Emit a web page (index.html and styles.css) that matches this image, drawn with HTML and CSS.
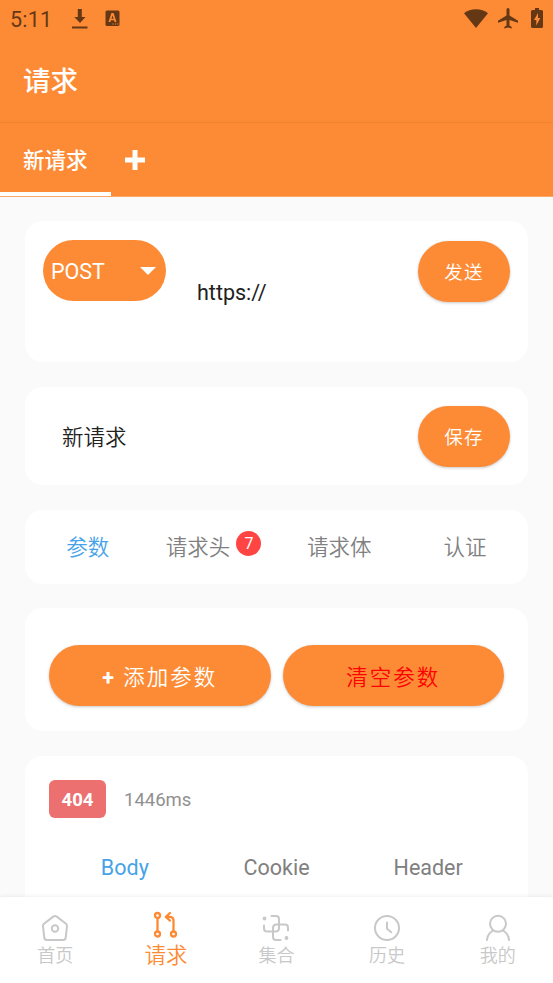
FILE: index.html
```html
<!DOCTYPE html>
<html lang="zh-CN">
<head>
  <meta charset="UTF-8">
  <meta name="viewport" content="width=device-width, initial-scale=1.0">
  <title>请求</title>
  <link rel="stylesheet" href="styles.css">
</head>
<body>
  <header class="header">
    <div class="statusbar">
      <span class="time">5:11</span>
      <svg class="icon-download" width="16" height="22" viewBox="0 0 16 22"><path d="M5.8 1h4v8h3.7L8 15 2.3 9h3.5zM0 18.5h15.5v2H0z"/></svg>
      <svg class="icon-lang" width="15" height="17" viewBox="0 0 15 17"><path fill-rule="evenodd" d="M2 .5h11a1.5 1.5 0 0 1 1.5 1.5v12.500a1.500 1.500 0 0 1-1.500 1.500H2A1.500 1.500 0 0 1 .5 14.500V2A1.500 1.500 0 0 1 2 .5zM6.400 3L3.500 12h1.900l.5-1.800h3.200l.5 1.800h1.900L8.600 3zM7.500 5.400l1.100 3.300H6.400zM7.500 13.400v1.100h1.100v-1.100zM10 13.400v1.100h1.100v-1.100zM12.300 13.400v1.100h1.100v-1.100z"/></svg>
      <div class="status-right">
        <svg width="24" height="19" viewBox="0 0 24 19"><path d="M12 19L0 4.200C6-1.200 18-1.200 24 4.200z"/></svg>
        <svg width="20" height="21" viewBox="0 0 20 21"><path d="M20 14.800v-2.100L11.500 7.400V1.500a1.500 1.500 0 0 0-3 0v5.900L0 12.700v2.100l8.500-2.700v5.400L6.300 19v1.600l3.700-1 3.700 1V19l-2.200-1.500v-5.400z"/></svg>
        <svg width="12" height="20" viewBox="0 0 12 20"><path fill-rule="evenodd" d="M4 0h4v2h2.500A1.500 1.500 0 0 1 12 3.500v15a1.500 1.500 0 0 1-1.500 1.500h-9A1.500 1.500 0 0 1 0 18.500v-15A1.500 1.500 0 0 1 1.500 2H4zM7 5l-4 7h2.300v5.500L9.300 10H7z"/></svg>
      </div>
    </div>
    <h1 class="title">请求</h1>
    <div class="request-tabs">
      <div class="request-tab">新请求</div>
      <div class="new-tab"><svg width="20" height="20" viewBox="0 0 20 20"><path d="M10 2.500v15M2.500 10h15" stroke="#fff" stroke-width="5" stroke-linecap="square"/></svg></div>
    </div>
  </header>

  <main class="content">
    <section class="card url-card">
      <div class="method">POST<span class="caret"></span></div>
      <div class="url">https://</div>
      <button class="btn btn-small">发送</button>
    </section>

    <section class="card name-card">
      <div class="name">新请求</div>
      <button class="btn btn-small">保存</button>
    </section>

    <section class="card tabs">
      <div class="tab active">参数</div>
      <div class="tab">请求头<span class="badge">7</span></div>
      <div class="tab">请求体</div>
      <div class="tab">认证</div>
    </section>

    <section class="card actions">
      <button class="btn"><b>+</b> 添加参数</button>
      <button class="btn danger">清空参数</button>
    </section>

    <section class="card response">
      <div class="result">
        <span class="code">404</span>
        <span class="duration">1446ms</span>
      </div>
      <div class="response-tabs">
        <div class="tab active">Body</div>
        <div class="tab">Cookie</div>
        <div class="tab">Header</div>
      </div>
    </section>
  </main>

  <nav class="nav">
    <div class="nav-item">
      <svg width="28" height="28" viewBox="0 0 28 28"><path d="M12.200 2.600L3 9.800q-1.200 1-1 2.500l1.300 11.400Q3.600 26 6 26h16q2.400 0 2.700-2.300L26 12.300q.2-1.500-1-2.500l-9.200-7.200q-1.800-1.300-3.600 0z"/><circle cx="14" cy="14.500" r="3.200"/></svg>
      <span>首页</span>
    </div>
    <div class="nav-item current">
      <svg width="28" height="28" viewBox="0 0 28 28"><circle cx="5.500" cy="4.500" r="2.500"/><circle cx="5.500" cy="23" r="2.500"/><circle cx="21.500" cy="23" r="2.500"/><path d="M5.500 7.200v13M21.500 20.300V9.500q0-3.700-3.700-3.700h-3.500M18 2l-4.200 3.800L18 9.600"/></svg>
      <span>请求</span>
    </div>
    <div class="nav-item">
      <svg width="28" height="28" viewBox="0 0 28 28"><path d="M9.500 2H14q3 0 3 3V14q0 3.500-3.500 3.500H5q-3 0-3-3v-3M18.500 26H14q-3 0-3-3V14q0-3.500 3.500-3.500H23q3 0 3 3v3"/><circle class="dot" cx="2.500" cy="4.500" r="1.900"/><circle class="dot" cx="24.500" cy="24" r="1.900"/></svg>
      <span>集合</span>
    </div>
    <div class="nav-item">
      <svg width="28" height="28" viewBox="0 0 28 28"><circle cx="14" cy="14" r="12"/><path d="M14 8.500v6.300l4.300 3.400"/></svg>
      <span>历史</span>
    </div>
    <div class="nav-item">
      <svg width="28" height="28" viewBox="0 0 28 28"><circle cx="14" cy="9.800" r="8"/><path d="M3 26q.3-6 6-9.500M25 26q-.3-6-6-9.500"/></svg>
      <span>我的</span>
    </div>
  </nav>
</body>
</html>
```
FILE: styles.css
```css
* { box-sizing: border-box; }
body { margin: 0; height: 983px; overflow: hidden; display: flex; flex-direction: column; background: #fafafa; color: #212121; font-family: Roboto, "Noto Sans CJK SC DemiLight", "Noto Sans CJK SC", sans-serif; font-size: 21.5px; }
svg { display: block; }

/* header */
.header { flex: none; height: 197px; background: #fd8b35; color: #fff; font-family: Roboto, "Noto Sans CJK SC", sans-serif; }
.statusbar { height: 37px; display: flex; align-items: center; padding: 0 10px 0 10px; color: #653815; }
.statusbar svg { fill: #653815; }
.time { width: 62px; font-size: 21.5px; letter-spacing: 0.2px; padding-top: 2px; }
.icon-lang { margin-left: 17px; }
.status-right { margin-left: auto; display: flex; align-items: center; gap: 10px; padding-bottom: 1px; }
.status-right svg:last-child { margin-left: 3px; }
.title { margin: 0; height: 86px; padding-left: 23px; font-size: 27.5px; font-weight: 500; line-height: 89px; border-bottom: 1px solid #ef8433; }
.request-tabs { display: flex; height: 74px; border-bottom: 1px solid #fba869; }
.request-tab { width: 111px; padding-left: 23px; font-weight: 500; line-height: 75px; border-bottom: 4px solid #fff; }
.new-tab { padding: 27px 0 0 14px; }

/* cards */
.content { flex: 1; min-height: 0; overflow: hidden; display: flex; flex-direction: column; gap: 25px; padding: 24px 25px 0; }
.card { flex: none; background: #fff; border-radius: 18px; }
.url-card { height: 141px; display: flex; align-items: flex-start; padding: 19px 18px; }
.method { width: 123px; height: 61px; display: flex; align-items: center; justify-content: space-between; padding: 1px 10px 0 8px; border-radius: 31px; background: #fd8b35; color: #fff; }
.caret { border: 8px solid transparent; border-top-color: #fff; border-bottom: 0; }
.url { flex: 1; padding: 40px 0 0 31px; line-height: 26px; }
.btn { height: 61px; padding: 0; border: 0; border-radius: 31px; background: #fd8b35; color: #fff; font-family: inherit; font-size: 21.5px; font-weight: 350; letter-spacing: 2px; box-shadow: 0 1px 3px rgba(0, 0, 0, 0.22); }
.btn-small { width: 92px; font-size: 18.5px; letter-spacing: 1.3px; }
.url-card .btn { margin-top: 1px; padding-bottom: 2px; }
.name-card { height: 98px; display: flex; align-items: center; padding: 0 18px 0 37px; }
.name { flex: 1; padding-bottom: 2px; font-weight: 350; }
.tabs { height: 74px; display: flex; align-items: center; padding-bottom: 3px; font-weight: 350; }
.tab { flex: 1; display: flex; justify-content: center; align-items: center; color: #808080; }
.tab.active { color: #46a3e8; }
.badge { width: 25px; height: 25px; margin: -4px 0 0 6px; border-radius: 50%; background: #ff4444; color: #fff; font-size: 16px; font-weight: 400; line-height: 25px; text-align: center; }
.actions { height: 123px; margin-top: -1px; display: flex; gap: 12px; padding: 37px 24px 0; }
.actions .btn { flex: 1; }
.actions b { font-weight: 700; }
.danger { color: #ff0000; }
.response { height: 300px; padding: 24px 24px 0; }
.result { display: flex; align-items: center; gap: 18px; }
.code { width: 57px; height: 38px; border-radius: 6px; background: #ed7070; color: #fff; font-size: 18.5px; font-weight: bold; line-height: 40px; text-align: center; }
.duration { color: #909090; font-size: 18.5px; padding-top: 2px; }
.response-tabs { display: flex; margin-top: 37px; line-height: 26px; }

/* bottom navigation */
.nav { position: relative; flex: none; height: 86px; display: flex; background: #fff; color: #c8c8c8; box-shadow: 0 0 4px rgba(0, 0, 0, 0.1); }
.nav-item { flex: 1; display: flex; flex-direction: column; align-items: center; padding-top: 17px; font-size: 18px; font-weight: 350; line-height: 27px; }
.nav-item svg { fill: none; stroke: #c8c8c8; stroke-width: 2; stroke-linecap: round; stroke-linejoin: round; }
.nav-item .dot { fill: #c8c8c8; stroke: none; }
.nav-item.current { padding-top: 14px; color: #fd8b35; font-size: 21.5px; line-height: 33px; }
.nav-item.current svg { stroke: #fd8b35; stroke-width: 2.3; }
```
